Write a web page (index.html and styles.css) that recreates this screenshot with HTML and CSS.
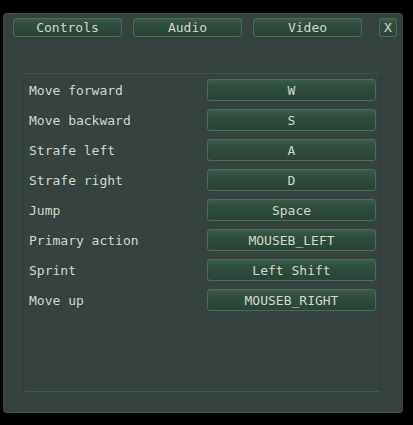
FILE: index.html
```html
<!DOCTYPE html>
<html>
<head>
<meta charset="utf-8">
<link rel="stylesheet" href="styles.css">
</head>
<body>
<div class="window">
  <div class="tabs">
    <div class="btn tab">Controls</div>
    <div class="btn tab">Audio</div>
    <div class="btn tab">Video</div>
    <div class="btn close">X</div>
  </div>
  <div class="panel">
    <div class="row"><span class="label">Move forward</span><div class="btn key">W</div></div>
    <div class="row"><span class="label">Move backward</span><div class="btn key">S</div></div>
    <div class="row"><span class="label">Strafe left</span><div class="btn key">A</div></div>
    <div class="row"><span class="label">Strafe right</span><div class="btn key">D</div></div>
    <div class="row"><span class="label">Jump</span><div class="btn key">Space</div></div>
    <div class="row"><span class="label">Primary action</span><div class="btn key">MOUSEB_LEFT</div></div>
    <div class="row"><span class="label">Sprint</span><div class="btn key">Left Shift</div></div>
    <div class="row"><span class="label">Move up</span><div class="btn key">MOUSEB_RIGHT</div></div>
  </div>
</div>
</body>
</html>
```
FILE: styles.css
```css
html, body {
  margin: 0;
  padding: 0;
  background: #000;
}
body {
  padding: 13px 0 0 3px;
  font-family: "DejaVu Sans Mono", "Liberation Mono", monospace;
  font-size: 13px;
  color: #d3d7cb;
}
.window {
  box-sizing: border-box;
  width: 400px;
  height: 400px;
  background: #354240;
  border-radius: 4px;
  border-top: 1px solid #3e5049;
  border-bottom: 1px solid #3c5248;
  padding: 4px 6px 20px 10px;
  display: flex;
  flex-direction: column;
}
.tabs {
  display: flex;
  gap: 11px;
  height: 19px;
}
.btn {
  box-sizing: border-box;
  display: flex;
  align-items: center;
  justify-content: center;
  border: 1px solid #4e6c55;
  border-radius: 3px;
  background: linear-gradient(to bottom, #3b5a48 0%, #2f4d3f 35%, #284437 100%);
  white-space: nowrap;
  line-height: 1;
}
.tab {
  width: 109px;
  height: 19px;
}
.close {
  width: 18px;
  height: 19px;
  margin-left: auto;
}
.panel {
  margin-top: 36px;
  margin-left: 10px;
  margin-right: 16px;
  flex: 1;
  border: 1px solid #2f3c39;
  border-top-color: #3f524a;
  border-bottom-color: #3d5a4a;
  border-radius: 3px;
  padding: 5px 4px 0 4px;
  display: flex;
  flex-direction: column;
  gap: 8px;
}
.row {
  display: flex;
  align-items: center;
  justify-content: space-between;
  height: 22px;
}
.label {
  padding-left: 1px;
}
.key {
  width: 169px;
  height: 22px;
}
```
